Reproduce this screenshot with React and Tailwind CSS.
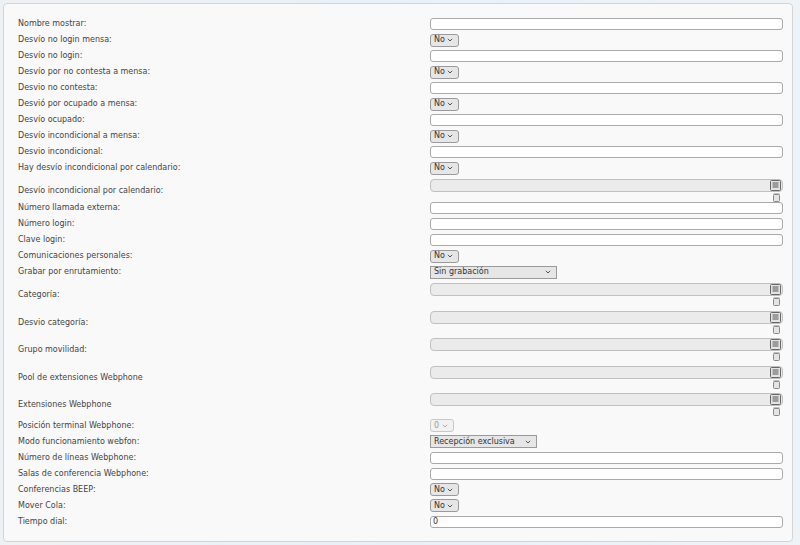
const rows = [
  ["Nombre mostrar:", "text"],
  ["Desvío no login mensa:", "no"],
  ["Desvío no login:", "text"],
  ["Desvío por no contesta a mensa:", "no"],
  ["Desvio no contesta:", "text"],
  ["Desvió por ocupado a mensa:", "no"],
  ["Desvío ocupado:", "text"],
  ["Desvío incondicional a mensa:", "no"],
  ["Desvio incondicional:", "text"],
  ["Hay desvío incondicional por calendario:", "no"],
  ["Desvío incondicional por calendario:", "tall24"],
  ["Número llamada externa:", "text"],
  ["Número login:", "text"],
  ["Clave login:", "text"],
  ["Comunicaciones personales:", "no"],
  ["Grabar por enrutamiento:", "sin"],
  ["Categoría:", "tall"],
  ["Desvio categoría:", "tall"],
  ["Grupo movilidad:", "tall"],
  ["Pool de extensiones Webphone", "tall"],
  ["Extensiones Webphone", "tall"],
  ["Posición terminal Webphone:", "zero"],
  ["Modo funcionamiento webfon:", "rec"],
  ["Número de líneas Webphone:", "text"],
  ["Salas de conferencia Webphone:", "text"],
  ["Conferencias BEEP:", "no"],
  ["Mover Cola:", "no"],
  ["Tiempo dial:", "dial"],
];

const Chev = ({ c = "#333" }) => (
  <svg width="6" height="4" viewBox="0 0 6 4" className="shrink-0"><path d="M0.8 0.8l2.2 2.2L5.2 0.8" fill="none" stroke={c} strokeWidth="1" /></svg>
);

function Sel({ w, label, disabled, square }) {
  return (
    <div className={`h-[13px] ${w} shrink-0 flex items-center justify-between pl-[3px] pr-[5px] border ${disabled ? "border-[#c8c8c8] bg-[#f2f2f2] text-[#999]" : "border-[#9a9a9a] bg-[#e6e6e6] text-[#333]"} ${square ? "rounded-none" : "rounded-[3px]"}`}>
      <span className="leading-none">{label}</span>
      <Chev c={disabled ? "#aaa" : "#555"} />
    </div>
  );
}

function Tall() {
  return (
    <div className="flex flex-col w-[353px] pt-[3px]">
      <div className="h-[13px] w-full border border-[#c0c0c0] bg-[#ebebeb] rounded-[4px] flex items-center justify-end pr-[1px]">
        <svg width="11" height="11" viewBox="0 0 11 11" className="shrink-0"><rect x="0.5" y="0.5" width="10" height="10" rx="1" fill="#e4e4e4" stroke="#666" /><path d="M2.5 3h6M2.5 5h6M2.5 7h6" stroke="#555" /></svg>
      </div>
      <div className="flex justify-end pr-[3px] pt-[1px]">
        <svg width="7" height="9" viewBox="0 0 7 9" className="shrink-0"><rect x="0.5" y="1.5" width="6" height="7" rx="1" fill="#e4e4e4" stroke="#888" /><path d="M0.5 1h6" stroke="#888" /></svg>
      </div>
    </div>
  );
}

function Control({ t }) {
  if (t === "text") return <div className="h-[12px] w-[353px] border border-[#a9a9a9] bg-white rounded-[3px]" />;
  if (t === "dial") return <div className="h-[12px] w-[353px] border border-[#a9a9a9] bg-white rounded-[3px] flex items-center pl-[2px] text-[8px] text-[#333]">0</div>;
  if (t === "no") return <Sel w="w-[29px]" label="No" />;
  if (t === "zero") return <Sel w="w-[24px]" label="0" disabled />;
  if (t === "sin") return <Sel w="w-[127px]" label="Sin grabación" square />;
  if (t === "rec") return <Sel w="w-[107px]" label="Recepción exclusiva" square />;
  return <Tall />;
}

export default function App() {
  return (
    <div className="w-[800px] h-[545px] bg-gradient-to-r from-[#eef1f4] via-[#e8f1f9] to-[#eef3f7] p-[3px] overflow-hidden" style={{ fontFamily: '"DejaVu Sans", Verdana, sans-serif' }}>
      <div className="w-[790px] h-[539px] bg-[#f9f9f9] border border-[#d4d4d4] rounded-[4px] pt-[12px]">
        {rows.map(([l, t], i) => {
          const tall = t === "tall" || t === "tall24";
          const h = t === "tall24" ? "h-[24px]" : t === "tall" ? "h-[27.6px]" : "h-[16px]";
          return (
            <div key={i} className={`flex ${h} ${tall ? "items-start" : "items-center"}`}>
              <div className={`w-[426px] shrink-0 pl-[14px] text-[8px] text-[#444] ${tall ? "pt-[9px]" : ""}`}>{l}</div>
              <div className="text-[8px]"><Control t={t} /></div>
            </div>
          );
        })}
      </div>
    </div>
  );
}
